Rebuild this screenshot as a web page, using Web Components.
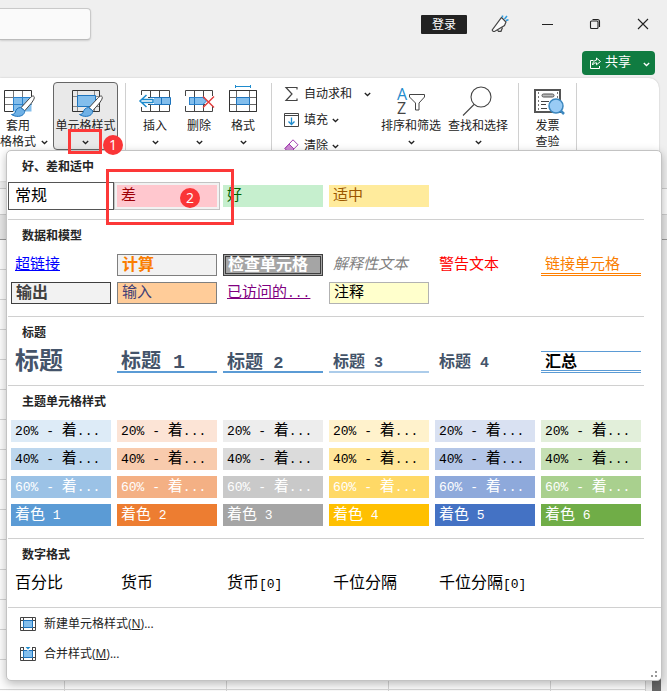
<!DOCTYPE html>
<html lang="zh-CN">
<head>
<meta charset="utf-8">
<title>单元格样式</title>
<style>
  html, body { margin: 0; height: 100%; }
  body { background: #efefef; color: #222; font: 12px/16px "Open Sans", "Noto Sans CJK SC", sans-serif; overflow: hidden; }
</style>
</head>
<body>
<excel-window>
  <title-bar slot="title"></title-bar>
  <ribbon-bar slot="ribbon"></ribbon-bar>
  <sheet-grid slot="sheet"></sheet-grid>
  <style-gallery slot="menu">
    <style-section heading="好、差和适中">
      <style-cell look="normal">常规</style-cell>
      <style-cell look="bad">差</style-cell>
      <style-cell look="good">好</style-cell>
      <style-cell look="neutral">适中</style-cell>
    </style-section>
    <style-section heading="数据和模型">
      <style-cell look="link">超链接</style-cell>
      <style-cell look="calc">计算</style-cell>
      <style-cell look="check">检查单元格</style-cell>
      <style-cell look="explain">解释性文本</style-cell>
      <style-cell look="warn">警告文本</style-cell>
      <style-cell look="linked">链接单元格</style-cell>
      <style-cell look="output">输出</style-cell>
      <style-cell look="input">输入</style-cell>
      <style-cell look="visited">已访问的...</style-cell>
      <style-cell look="note">注释</style-cell>
    </style-section>
    <style-section heading="标题">
      <style-cell look="title">标题</style-cell>
      <style-cell look="h1">标题 1</style-cell>
      <style-cell look="h2">标题 2</style-cell>
      <style-cell look="h3">标题 3</style-cell>
      <style-cell look="h4">标题 4</style-cell>
      <style-cell look="total">汇总</style-cell>
    </style-section>
    <style-section heading="主题单元格样式" id="theme"></style-section>
    <style-section heading="数字格式">
      <style-cell look="number">百分比</style-cell>
      <style-cell look="number">货币</style-cell>
      <style-cell look="number">货币[0]</style-cell>
      <style-cell look="number">千位分隔</style-cell>
      <style-cell look="number">千位分隔[0]</style-cell>
    </style-section>
    <menu-command slot="commands" label="新建单元格样式" key="N">
      <svg width="16" height="14" viewBox="0 0 16 14" fill="none"><path d="M.5.5h15v13H.5zM.5 3.500h15M.5 10.500h15M3.500.5v13M12.500.5v13" stroke="#444"/><path d="M3.500 3.500h9v7h-9z" fill="#83beec" stroke="#1e74bd"/></svg>
    </menu-command>
    <menu-command slot="commands" label="合并样式" key="M">
      <svg width="16" height="14" viewBox="0 0 16 14" fill="none"><path d="M4 .5H.5v13h15V.5H12M.5 3.500h3M12.500 3.500h3M.5 10.500h15M3.500.5v13M12.500.5v13" stroke="#444"/><path d="M3.500 3.500h9v7h-9z" fill="#83beec" stroke="#1e74bd"/><path d="M4.500-1h7v2L8 4 4.500 1z" fill="#fff"/><path d="M5-.5h6L8 2.500z" fill="#1e8bcd"/></svg>
    </menu-command>
  </style-gallery>
</excel-window>

<script>
const define = (name, html, setup) => customElements.define(name, class extends HTMLElement {
  connectedCallback() {
    if (this.shadowRoot) return;
    const root = this.attachShadow({ mode: 'open' });
    const template = document.createElement('template');
    template.innerHTML = html;
    root.append(template.content.cloneNode(true));
    if (setup) setup(this, root);
  }
});

const reset = 'button{font:inherit;color:inherit;background:none;border:0;margin:0;padding:0;box-sizing:border-box}svg{display:block;overflow:visible}';

define('excel-window', `<style>
  :host { display: flex; flex-direction: column; min-height: 100vh; position: relative; }
  ::slotted([slot=sheet]) { flex: 1; }
</style><slot name="title"></slot><slot name="ribbon"></slot><slot name="sheet"></slot><slot name="menu"></slot>`);

define('chevron-down', `<style>:host{display:inline-flex}svg{display:block}</style>
<svg width="7" height="5" viewBox="0 0 7 5" fill="none" stroke="currentColor" stroke-width="1.300"><path d="M.8 1l2.700 2.500L6.200 1"/></svg>`);

/* Red outline around a control, or a numbered step marker */
define('step-box', `<style>:host{position:absolute;box-sizing:border-box;border:3px solid #fc3838;z-index:5;pointer-events:none}</style>`);
define('step-badge', `<style>:host{position:absolute;z-index:6;width:20px;height:20px;border-radius:50%;background:#fa3537;color:#fff;font:14px/20px "Open Sans",sans-serif;text-align:center;pointer-events:none}</style><slot></slot>`);

define('title-bar', `<style>${reset}
  :host { display: block; height: 78px; }
  .top { display: flex; align-items: center; height: 48px; }
  input { width: 91px; height: 32px; box-sizing: border-box; border: 1px solid #c9c9c9; border-left: 0; border-bottom-color: #bbb; border-radius: 0 4px 4px 0; background: #fafafa; box-shadow: 0 1px 2px #0002; outline: 0; margin: 0 auto 0 0; }
  .top button { width: 48px; height: 48px; display: flex; align-items: center; justify-content: center; }
  .top .login { width: 46px; height: 19px; background: #222; color: #fff; border-radius: 1px; margin-right: 10px; padding-top: 2px; }
  .top .pen { width: 46px; }
  .bottom { display: flex; justify-content: flex-end; padding: 3px 12px 0 0; }
  .share { height: 24px; width: 73px; padding: 0 5px 0 8px; border-radius: 4px; background: #107c41; color: #fff; display: flex; align-items: center; gap: 4px; font-size: 13px; }
  .share chevron-down { margin: 2px 0 0 auto; }
  .share span { line-height: 18px; padding-bottom: 4px; }
</style>
<div class="top">
  <input type="search" aria-label="搜索">
  <button class="login">登录</button>
  <button class="pen" aria-label="反馈"><svg width="18" height="18" viewBox="0 0 18 18" fill="none" stroke="#444" stroke-width="1.200"><path d="M10.500 2.500l4.500 4.500-1.500 3.500-10 6H2.200L1.200 15z" fill="#fafafa"/><path d="M6.500 15l1 1.300h2.500l1.500-3.800"/><path d="M11.500 2.500V.5M13.500 4l2.500-3M15 5.500l2.500-.7" stroke="#2b9be0" stroke-width="1.500"/></svg></button>
  <button aria-label="最小化"><svg width="11" height="11" viewBox="0 0 11 11" stroke="#222"><path d="M0 5.500h11"/></svg></button>
  <button aria-label="还原"><svg width="10" height="10" viewBox="0 0 10 10" fill="none" stroke="#222" stroke-width="1.100"><rect x=".5" y="2" width="7.500" height="7.500" rx="1"/><path d="M2.500.5H7.500a2 2 0 0 1 2 2V8"/></svg></button>
  <button aria-label="关闭"><svg width="10" height="10" viewBox="0 0 10 10" stroke="#222" stroke-width="1.100"><path d="M0 0l10 10M10 0L0 10"/></svg></button>
</div>
<div class="bottom"><button class="share">
  <svg width="11" height="12" viewBox="0 0 11 12" fill="none" stroke="#fff"><path d="M3.500 3.500H.5v8h9V9"/><path d="M6.500 1l4 3.500-4 3.300V5.800C4.500 5.800 3.500 6.500 2.500 8c.2-3 1.800-4.700 4-4.900z"/></svg>
  <span>共享</span><chevron-down></chevron-down></button></div>`);

define('ribbon-button', `<style>${reset}
  :host { display: block; position: relative; flex: none; }
  button { width: 100%; height: 68px; border: 1px solid transparent; padding: 1px 0 0; display: flex; flex-direction: column; align-items: center; justify-content: flex-start; line-height: 16px; white-space: nowrap; }
  :host([active]) button { background: #e9e9e9; border-color: #666; border-radius: 4px; }
  :host([cut]) button { align-items: flex-start; border-width: 1px 0; }
  :host([cut]) .first { width: 36px; text-align: center; }
  .icon { width: 36px; height: 34px; flex: none; display: block; }
  .line { height: 16px; flex: none; display: flex; align-items: center; gap: 5px; }
  .first { display: block; }
</style><button><span class="icon"><slot></slot></span><span class="line first"></span><span class="line last"></span></button><slot name="note"></slot>`,
(host, root) => {
  root.querySelector('.first').textContent = host.getAttribute('label');
  const last = root.querySelector('.last');
  last.textContent = host.getAttribute('more') || '';
  if (!host.hasAttribute('plain')) last.append(document.createElement('chevron-down'));
});

define('ribbon-command', `<style>${reset}
  :host { display: block; }
  button { display: flex; align-items: center; height: 26px; white-space: nowrap; }
  .icon { width: 21px; }
  chevron-down { margin-left: var(--gap, 4px); }
</style><button><span class="icon"><slot></slot></span><span class="t"></span><chevron-down></chevron-down></button>`,
(host, root) => { root.querySelector('.t').textContent = host.getAttribute('label'); });

const brush = `<path d="M34 12.500c-1-1.500-3 .5-5 2.500l-8 8.700 3.500 3.300L31.500 19c2-3 3.500-5 2.500-6.500z" fill="#fff" stroke="#444"/><path d="M20.500 23.500c-3 .2-4.500 2-5.200 4.500-.4 1.500-1.800 2.500-3.800 2.500 4 2.800 10.500 2.500 12.500-1 .8-1.300.8-2 .5-3z" fill="#6fb1e6" stroke="#1e74bd"/>`;

define('ribbon-bar', `<style>${reset}
  :host { display: block; height: 103px; margin-right: 8px; box-sizing: border-box; background: #fff; border-radius: 0 10px 10px 0; box-shadow: 0 0 2px #0003; }
  .row { display: flex; padding-top: 4px; }
  hr { flex: none; width: 1px; height: 80px; margin: 1px 6px 0; border: 0; background: #d0d0d0; }
  hr.wide { margin: 1px 7px 0; } hr.end { margin-right: 0; }
  .w44 { width: 44px; } .w66 { width: 66px; margin-right: 1px; }
  .small { width: 95px; margin-left: 5px; margin-top: -1px; flex: none; }
</style>
<div class="row">
<ribbon-button cut style="width:53px" label="套用" more="格格式"><svg width="36" height="32" fill="none"><path d="M13.500 13.500h18v14h-18z" fill="#83beec"/><path d="M4.500 13.500h27M4.500 20.500h27M13.500 6.500v21M22.500 6.500v21" stroke="#777"/><path d="M13.500 27V13.500H31M13.500 20.500h18M22.500 13.500v14" stroke="#2b82cc"/><path d="M13 27.500H4.500v-21h27V14" stroke="#333"/>${brush}</svg></ribbon-button>
<ribbon-button active style="width:65px" label="单元格样式"><svg width="36" height="32" fill="none"><path d="M4.500 12.500h27M4.500 22.500h27M9.500 6.500v21M26.500 6.500v21" stroke="#888"/><path d="M4.500 6.500h27v21h-27z" stroke="#333"/><path d="M9.500 11.500h18v11h-18z" fill="#83beec" stroke="#1e74bd"/>${brush}</svg>
<step-box slot="note" style="left:15px;top:47px;width:34px;height:25px"></step-box><step-badge slot="note" style="left:50px;top:53px">1</step-badge></ribbon-button>
<hr class="wide">
<ribbon-button class="w44" label="插入"><svg width="36" height="32" fill="none"><path d="M4.500 6.500h28v21h-28zM13.500 6.500v21M22.500 6.500v21M4.500 13.500h27M4.500 20.500h27" stroke="#444"/><path d="M3 11h8v12H3z" fill="#fff"/><path d="M13.500 13.500h20v7h-20z" fill="#83beec" stroke="#1e74bd"/><path d="M24.500 13.500v7" stroke="#1e74bd"/><path d="M17 14v6H5v-6z" fill="#fff"/><path d="M16 15.500H5M16 18.500H5M16 15v4M9.500 11L3 17l6.500 6" stroke="#1e8bcd" stroke-width="1.500"/></svg></ribbon-button>
<ribbon-button class="w44" label="删除"><svg width="36" height="32" fill="none"><path d="M4.500 6.500h27v21h-27zM13.500 6.500v21M22.500 6.500v21M4.500 13.500h27M4.500 20.500h27" stroke="#444"/><path d="M3 12h5v10H3zM24 12h9v10h-9z" fill="#fff"/><path d="M8.500 13.500H22l3.500 3.500-3.500 3.500H8.500z" fill="#83beec" stroke="#2b82cc"/><path d="M13.500 13.500v7" stroke="#1e74bd"/><path d="M22 12.500l11 11M33 12.500l-11 11" stroke="#e23b3b" stroke-width="1.400"/></svg></ribbon-button>
<ribbon-button class="w44" label="格式"><svg width="36" height="32" fill="none"><path d="M4.500 6.500h27v21h-27zM11.500 6.500v21M24.500 6.500v21M4.500 13.500h27M4.500 20.500h27" stroke="#666"/><path d="M4.500 6.500h27v21h-27z" stroke="#333"/><path d="M11.500 13.500h13v7h-13z" fill="#83beec" stroke="#1e74bd"/><path d="M10.500 2.500h15M10.500 1v3M25.500 1v3" stroke="#1e8bcd"/></svg></ribbon-button>
<hr>
<div class="small">
<ribbon-command label="自动求和" style="--gap:12px"><svg width="16" height="16" fill="none" stroke="#444" stroke-width="1.200"><path d="M14 3.500V1.500H3l6 6.500-6 6.500h11v-2"/></svg></ribbon-command>
<ribbon-command label="填充"><svg width="16" height="14" fill="none"><path d="M1.500.5h14v13h-14zM1.500 2.500h14" stroke="#444"/><path d="M8.500 4.500v7M5.500 8.500l3 3 3-3" stroke="#1e8bcd" stroke-width="1.300"/></svg></ribbon-command>
<ribbon-command label="清除"><svg width="16" height="14" fill="none" stroke="#a33eb0"><path d="M10 .8l5 5-7 7h-3l-3-3.500z" fill="#fff"/><path d="M6 5l5 5-3 3h-3l-3-3.500z" fill="#cf8bd6"/></svg></ribbon-command>
</div>
<ribbon-button class="w66" label="排序和筛选"><svg width="36" height="32" fill="none"><text x="4" y="16" font-family="Open Sans" font-size="16" fill="#1e8bcd">A</text><text x="4" y="30" font-family="Open Sans" font-size="16" fill="#444">Z</text><path d="M16.500 10.500h15v2.500l-5.500 6v7h-3.500v-7l-6-6z" stroke="#444"/></svg></ribbon-button>
<ribbon-button class="w66" label="查找和选择"><svg width="36" height="32" fill="none" stroke="#444" stroke-width="1.100"><circle cx="21" cy="13" r="10"/><path d="M14 20.500L3 31.500"/></svg></ribbon-button>
<hr>
<ribbon-button plain style="width:45px" label="发票" more="查验"><svg width="36" height="32" fill="none"><path d="M5 6h25v22H5z" stroke="#555" stroke-width="2"/><path d="M8.500 8v18M27.500 8v10" stroke="#777" stroke-dasharray="2 2"/><rect x="12" y="10" width="12" height="3" rx="1.500" stroke="#555" fill="#bbb"/><path d="M11 17.500h8M11 20.500h5M11 24.500h6" stroke="#444"/><path d="M30 26l4 4" stroke="#3b87bf" stroke-width="2.500"/><circle cx="26" cy="22" r="7" fill="#99cbf5" stroke="#3b87bf" stroke-width="1.500"/></svg></ribbon-button>
<hr class="end">
</div>`);

/* Worksheet behind the open menu: formula bar, column header, grid lines, scroll bar */
define('sheet-grid', `<style>
  :host { display: flex; flex-direction: column; }
  .formula { height: 27px; margin-top: 7px; border-block: 1px solid #ccc; background: #fafafa; box-sizing: border-box; }
  .head { height: 24px; background: #e6e6e6; border-bottom: 1px solid #999; }
  .body { flex: 1; display: flex; }
  .cells { flex: 1; background: repeating-linear-gradient(#0000 0 29px, #d4d4d4 29px 30px), repeating-linear-gradient(90deg, #0000 0 161px, #d4d4d4 161px 162px), #fcfcfc; background-position: 0 0, -97px 0, 0 0; background-size: auto, 200% 100%, auto; border-right: 1px solid #ccc; }
  .scroll { width: 21px; background: #ebebeb; display: flex; }
  .scroll i { width: 9px; margin-left: 6px; background: #666; }
</style><div class="formula"></div><div class="head"></div><div class="body"><div class="cells"></div><div class="scroll"><i></i></div></div>`);

define('style-gallery', `<style>
  :host { display: block; position: absolute; top: 150px; left: 6px; right: 5px; background: #fff; border: 1px solid #c3c3c3; border-radius: 5px; box-shadow: 0 3px 10px #0004; }
  .commands { margin-left: 1px; padding-bottom: 12px; }
  svg { position: absolute; right: 4px; bottom: 3px; display: block; }
  ::slotted(style-section:last-of-type) { --rule-end: -17px; }
</style><slot></slot><div class="commands"><slot name="commands"></slot></div>
<svg width="6" height="6" fill="#999"><path d="M4 0h2v2H4zM0 4h2v2H0zM4 4h2v2H4z"/></svg>`);

define('style-section', `<style>
  :host { display: block; margin: 0 17px 0 1px; }
  h3 { margin: 0; height: 34px; padding-left: 14px; box-sizing: border-box; font: bold 12px/30px "Noto Sans CJK SC", sans-serif; color: #262626; }
  .grid { display: grid; grid-template-columns: repeat(6, minmax(0, 1fr)); gap: 6px; padding: 0 3px 12px; }
  .rule { height: 1px; background: #d0d0d0; margin-right: var(--rule-end, 0); }
</style><h3></h3><div class="grid"><slot></slot></div><div class="rule"></div>`,
(host, root) => {
  root.querySelector('h3').textContent = host.getAttribute('heading');
});

define('style-cell', `<style>${reset}
  :host { display: block; position: relative; height: 22px; color: #000; --size: 15px; --mono: 13px; }
  button { display: flex; align-items: flex-start; justify-content: flex-start; width: 100%; height: 22px; padding: 0 0 0 4px; text-align: left; white-space: pre; font: var(--style, normal) var(--weight, normal) var(--size)/18px "Noto Sans CJK SC", sans-serif; background: var(--fill, none); }
  .latin { font-family: "Liberation Mono", monospace; font-size: var(--mono); line-height: 1; }
  :host([look=normal]) { --size: 16px; }
  :host([look=normal]) button { outline: 1px solid #555; outline-offset: 2px; }
  :host([look=bad]) { --fill: #ffc7ce; color: #9c0006; }
  :host([look=bad]) button { outline: 1px solid #c3c3c3; outline-offset: 2px; box-shadow: 0 0 0 2px #f2f2f2; }
  :host([look=good]) { --fill: #c6efce; color: #006100; }
  :host([look=neutral]) { --fill: #ffeb9c; color: #9c5700; }
  :host([look=link]) .text { color: #00f; text-decoration: underline; }
  :host([look=visited]) .text { color: #800080; text-decoration: underline; }
  :host([look=calc]) { --fill: #f2f2f2; --weight: bold; --size: 16px; color: #fa7d00; }
  :host([look=calc]) button, :host([look=input]) button { border: 1px solid #7f7f7f; line-height: 16px; }
  :host([look=check]) { --fill: #a5a5a5; --weight: bold; --size: 16px; color: #fff; }
  :host([look=check]) button { border: 3px double #3f3f3f; padding-left: 2px; line-height: 12px; }
  :host([look=explain]) { --style: italic; color: #7f7f7f; }
  :host([look=warn]) { color: #f00; }
  :host([look=linked]) { color: #fa7d00; }
  :host([look=linked]) button { border-bottom: 3px double #ff8001; }
  :host([look=output]) { --fill: #f2f2f2; --weight: bold; --size: 16px; color: #3f3f3f; }
  :host([look=output]) button { border: 1px solid #3f3f3f; line-height: 16px; }
  :host([look=input]) { --fill: #ffcc99; color: #3f3f76; }
  :host([look=note]) { --fill: #ffffcc; }
  :host([look=note]) button { border: 1px solid #b2b2b2; line-height: 16px; }
  :host([look=title]), :host([look=h1]), :host([look=h2]), :host([look=h3]), :host([look=h4]) { color: #44546a; --weight: bold; }
  :host([look=title]) { --size: 24px; }
  :host([look=title]) button { line-height: 16px; }
  :host([look=h1]) { --size: 20px; --mono: 20px; }
  :host([look=h2]) { --size: 18px; --mono: 17px; }
  :host([look=h3]), :host([look=h4]), :host([look=total]) { --size: 16px; --mono: 15px; }
  :host([look=h1]) button, :host([look=h2]) button { border-bottom: 2px solid #5b9bd5; }
  :host([look=h3]) button { border-bottom: 2px solid #acccea; }
  :host([look=total]) { --weight: bold; }
  :host([look=total]) button { border-top: 1px solid #5b9bd5; border-bottom: 3px double #5b9bd5; line-height: 16px; }
  :host([look=number]) { --size: 16px; }
  :host([look=number]) button { line-height: 16px; }
</style><button><span class="text"></span></button><slot name="note"></slot>`,
(host, root) => {
  const label = root.querySelector('.text');
  const text = host.textContent.trim();
  host.textContent = '';
  for (const run of text.match(/[\x20-\x7e]+|[^\x20-\x7e]+/g)) {
    const span = document.createElement('span');
    span.textContent = run;
    if (run.charCodeAt(0) < 127) span.className = 'latin';
    label.append(span);
  }
  if (host.getAttribute('look') === 'bad') {
    root.querySelector('slot').insertAdjacentHTML('afterend', '<step-box style="left:-11px;top:-16px;width:128px;height:56px"></step-box><step-badge style="left:63px;top:3px">2</step-badge>');
  }
});

define('menu-command', `<style>${reset}
  :host { display: block; }
  button { display: flex; align-items: center; gap: 8px; width: 100%; height: 30px; padding: 1px 0 0 12px; text-align: left; }
</style><button><slot></slot><span><span class="t"></span>(<u></u>)...</span></button>`,
(host, root) => {
  root.querySelector('.t').textContent = host.getAttribute('label');
  root.querySelector('u').textContent = host.getAttribute('key');
});

/* Theme swatches: three tints and the full accent, for each of the six accents */
const tints = {
  '20% - 着...': ['#ddebf7', '#fce4d6', '#ededed', '#fff2cc', '#d9e1f2', '#e2efda'],
  '40% - 着...': ['#bdd7ee', '#f8cbad', '#dbdbdb', '#ffe699', '#b4c6e7', '#c6e0b4'],
  '60% - 着...': ['#9bc2e6', '#f4b084', '#c9c9c9', '#ffd966', '#8ea9db', '#a9d08e'],
  '着色': ['#5b9bd5', '#ed7d31', '#a5a5a5', '#ffc000', '#4472c4', '#70ad47']
};
const theme = document.getElementById('theme');
Object.entries(tints).forEach(([name, colors], row) => colors.forEach((color, i) => {
  const cell = document.createElement('style-cell');
  cell.textContent = row === 3 ? `${name} ${i + 1}` : name;
  cell.style.cssText = `--fill:${color};color:${row > 1 ? '#fff' : '#000'}`;
  theme.append(cell);
}));
</script>
</body>
</html>
